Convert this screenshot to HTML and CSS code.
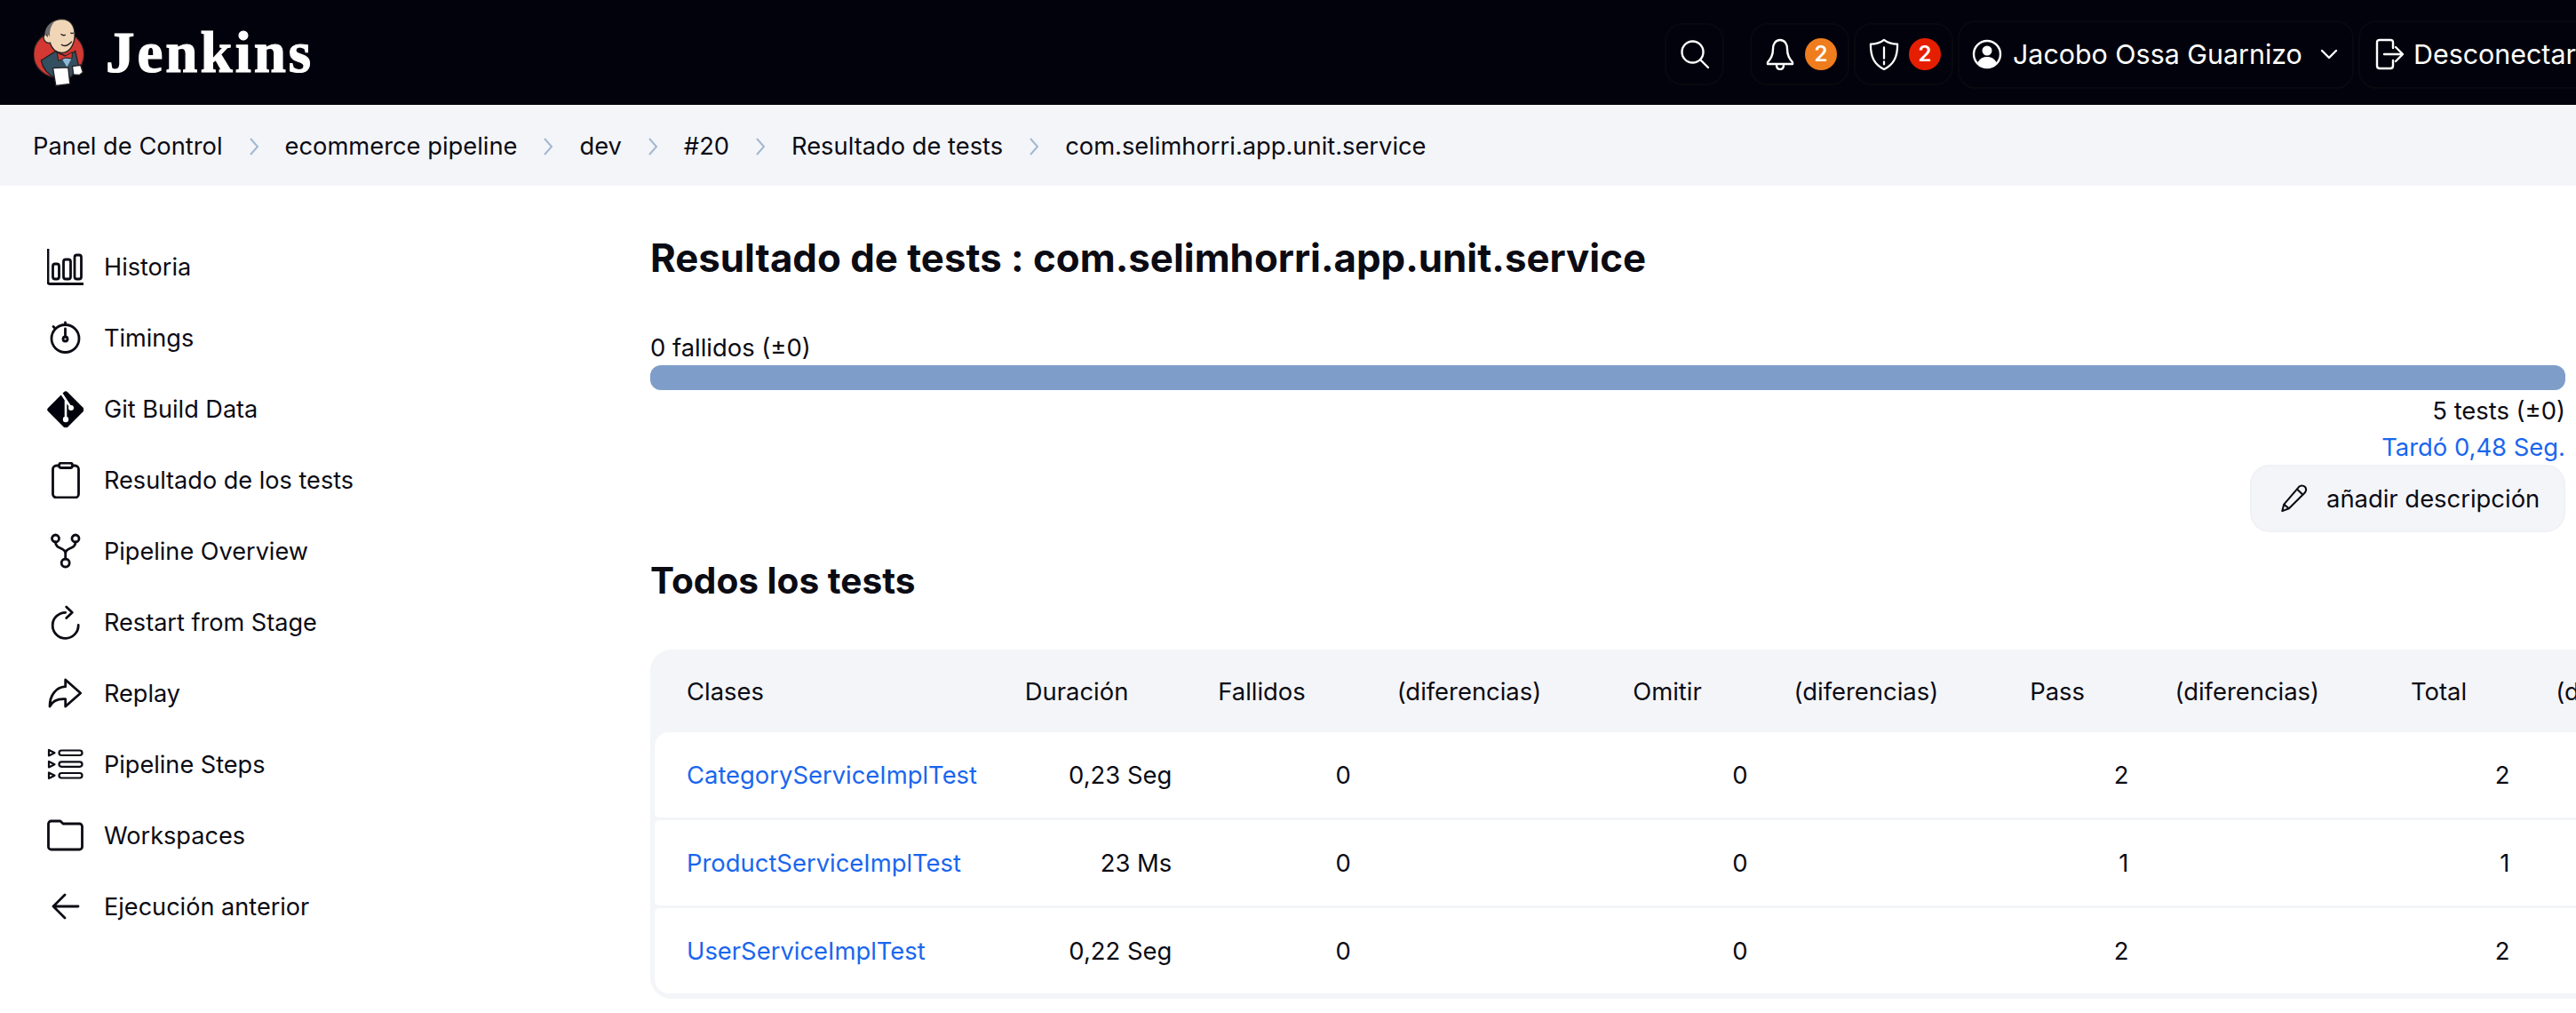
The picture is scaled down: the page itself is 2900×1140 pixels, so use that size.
FILE: index.html
```html
<!DOCTYPE html>
<html>
<head lang="es">
    <meta charset="UTF-8">
    <title>Resultado de tests</title>
    <link rel="stylesheet" href="styles.css">
</head>
<body>
    <header id="top">
        <div class="brand">
            <svg class="logo" viewBox="55 35 175 240">
                <ellipse cx="140" cy="162" rx="86" ry="80" fill="#d33833" stroke="#231f20" stroke-width="4"/>
                <path d="M80 182L128 152L170 170L196 150L207 200L182 238L130 242C105 232 86 212 80 182Z" fill="#335061" stroke="#231f20" stroke-width="4"/>
                <path d="M150 175L185 172L168 205Z" fill="#8fb8d6"/>
                <path d="M100 97C95 60 125 42 150 42C180 42 196 65 194 100C192 132 175 156 150 156C130 156 116 142 110 122C98 126 84 112 90 98C93 92 97 93 100 97Z" fill="#f0d6b7" stroke="#231f20" stroke-width="4"/>
                <path d="M92 98C92 75 105 55 127 48C111 65 108 85 110 102C104 92 97 92 92 98Z" fill="#6d6b6d"/>
                <path d="M147 92Q155 100 163 95M180 88Q185 93 190 88M148 128Q165 140 184 118" fill="none" stroke="#231f20" stroke-width="4"/>
                <path d="M134 156L161 167L186 154L185 176L162 173L139 184Z" fill="#d33833" stroke="#231f20" stroke-width="3"/>
                <path d="M120 208L172 206L178 262L130 268Z" fill="#fff" stroke="#231f20" stroke-width="4"/>
                <path d="M186 202L214 198L222 222L210 232L190 230Z" fill="#fff" stroke="#231f20" stroke-width="4"/>
            </svg>
            <span class="wordmark">Jenkins</span>
        </div>
        <div class="actions">
            <a class="btn btn-search">
                <svg class="hicon" viewBox="0 0 34 34"><circle cx="14.500" cy="14.500" r="12"/><path d="M23.500 23.500L32 32"/></svg>
            </a>
            <a class="btn btn-alert">
                <svg class="hicon" viewBox="0 0 32 36"><path d="M16 2C10.500 2 8 7 8 12C8 19 6 23 2 27V29H30V27C26 23 24 19 24 12C24 7 21.500 2 16 2Z"/><path d="M12 30C12 33 13.500 35 16 35C18.500 35 20 33 20 30"/></svg>
                <span class="badge orange">2</span>
            </a>
            <a class="btn btn-alert">
                <svg class="hicon" viewBox="0 0 36 38"><path d="M18 2C13 6 8 7 2 7C2 22 6 31 18 37C30 31 34 22 34 7C28 7 23 6 18 2Z"/><path d="M18 11V24M18 28V31"/></svg>
                <span class="badge red">2</span>
            </a>
            <a class="btn btn-user">
                <svg class="hicon user-icon" viewBox="0 0 34 34"><circle cx="17" cy="17" r="15"/><circle class="solid" cx="17" cy="13" r="5.500"/><path class="solid" d="M6 27C9 21 13 20 17 20C21 20 25 21 28 27C25 31 21 32 17 32C13 32 9 31 6 27Z"/></svg>
                <span>Jacobo Ossa Guarnizo</span>
                <svg class="hicon chevron" viewBox="0 0 20 12"><path d="M2 2L10 10L18 2"/></svg>
            </a>
            <a class="btn btn-logout">
                <svg class="hicon" viewBox="0 0 32 36"><path d="M20 11V5C20 3 19 2 17 2H5C3 2 2 3 2 5V31C2 33 3 34 5 34H17C19 34 20 33 20 31V25"/><path d="M10 18H30M23 10L31 18L23 26"/></svg>
                <span>Desconectar</span>
            </a>
        </div>
    </header>

    <nav id="crumbs">
        <a>Panel de Control</a>
        <svg class="sep" viewBox="0 0 12 22"><path d="M2 2L10 11L2 20"/></svg>
        <a>ecommerce pipeline</a>
        <svg class="sep" viewBox="0 0 12 22"><path d="M2 2L10 11L2 20"/></svg>
        <a>dev</a>
        <svg class="sep" viewBox="0 0 12 22"><path d="M2 2L10 11L2 20"/></svg>
        <a>#20</a>
        <svg class="sep" viewBox="0 0 12 22"><path d="M2 2L10 11L2 20"/></svg>
        <a>Resultado de tests</a>
        <svg class="sep" viewBox="0 0 12 22"><path d="M2 2L10 11L2 20"/></svg>
        <a>com.selimhorri.app.unit.service</a>
    </nav>

    <div id="page">
        <aside id="side">
            <a class="task">
                <svg class="ticon" viewBox="0 0 41 41"><path d="M1 0V37.500A2 2 0 0 0 3 39.500H41"/><rect x="6.500" y="17" width="7" height="17" rx="2.500"/><rect x="18.500" y="12" width="8" height="22" rx="2.500"/><rect x="31" y="7" width="7.500" height="27" rx="2.500"/></svg>
                <span>Historia</span>
            </a>
            <a class="task">
                <svg class="ticon" viewBox="0 0 41 41"><circle cx="20.500" cy="21" r="15.500"/><path d="M20.500 5V3M8.500 9L7 7.500M20.500 19V10"/><circle cx="20.500" cy="21.500" r="2.500"/></svg>
                <span>Timings</span>
            </a>
            <a class="task">
                <svg class="ticon" viewBox="0 0 41 41"><rect class="git-bg" x="5.500" y="5.500" width="31" height="31" rx="3" transform="rotate(45 21 21)"/><path class="git-line" d="M15 1L27 19M21 11V32"/><circle class="git-dot" cx="27" cy="19" r="3"/><circle class="git-dot" cx="21" cy="32" r="3.200"/></svg>
                <span>Git Build Data</span>
            </a>
            <a class="task">
                <svg class="ticon" viewBox="0 0 41 41"><rect x="6.500" y="4" width="29" height="36" rx="4"/><rect x="13.500" y="1" width="15" height="5.500" rx="2.500" class="clip"/></svg>
                <span>Resultado de los tests</span>
            </a>
            <a class="task">
                <svg class="ticon" viewBox="0 0 41 41"><circle cx="9.500" cy="6" r="4"/><circle cx="32" cy="6" r="4"/><circle cx="20.700" cy="33.500" r="4.500"/><path d="M9.500 10C9.500 19 20.700 15 20.700 23V29M32 10C32 19 20.700 15 20.700 23"/></svg>
                <span>Pipeline Overview</span>
            </a>
            <a class="task">
                <svg class="ticon" viewBox="0 0 41 41"><path d="M20.700 9.300A14.500 14.500 0 1 0 35.200 23.500"/><path d="M21.700 3L28.300 9.300L21.700 15.500"/></svg>
                <span>Restart from Stage</span>
            </a>
            <a class="task">
                <svg class="ticon" viewBox="0 0 41 41"><path d="M20.700 5L37.700 20L20.700 35V26.700C12 26 6 29 3 35C3 22 10 13.500 20.700 12.700Z"/></svg>
                <span>Replay</span>
            </a>
            <a class="task">
                <svg class="ticon thin" viewBox="0 0 41 41"><rect x="13.500" y="4.500" width="26" height="5.500" rx="2.700"/><rect x="13.500" y="17.300" width="26" height="5.500" rx="2.700"/><rect x="13.500" y="30" width="26" height="5.500" rx="2.700"/><path d="M2 4V10.500L8.500 7.300ZM2 17V23.500L8.500 20.300ZM2 29.500V36L8.500 32.800Z"/></svg>
                <span>Pipeline Steps</span>
            </a>
            <a class="task">
                <svg class="ticon" viewBox="0 0 41 41"><path d="M1.500 33V7A3 3 0 0 1 4.500 4H15L18 7H36.500A3 3 0 0 1 39.500 10V33A3 3 0 0 1 36.500 36H4.500A3 3 0 0 1 1.500 33Z"/></svg>
                <span>Workspaces</span>
            </a>
            <a class="task">
                <svg class="ticon" viewBox="0 0 41 41"><path d="M35 20H7M20 7L7 20L20 33"/></svg>
                <span>Ejecución anterior</span>
            </a>
        </aside>

        <main id="main">
            <h1>Resultado de tests : com.selimhorri.app.unit.service</h1>
            <div class="fails">0 fallidos (±0)</div>
            <div class="bar"></div>
            <div class="count">5 tests (±0)</div>
            <div class="took"><a>Tardó 0,48 Seg.</a></div>
            <div class="desc-row">
                <a class="desc-btn">
                    <svg class="pencil" viewBox="0 0 32 34"><path d="M2 32L4 24L22 3C24 1 27 1 29 3C31 5 31 8 29 10L10 29ZM4 24L10 29M20 6L26 12"/></svg>
                    <span>añadir descripción</span>
                </a>
            </div>
            <h2>Todos los tests</h2>
            <div class="table-wrap">
                <table class="results">
                    <colgroup>
                        <col class="w-name"><col class="w-dur"><col class="w-num"><col class="w-diff">
                        <col class="w-num2"><col class="w-diff"><col class="w-num3"><col class="w-diff">
                        <col class="w-num3"><col class="w-diff">
                    </colgroup>
                    <thead>
                        <tr>
                            <th>Clases</th><th>Duración</th><th>Fallidos</th><th>(diferencias)</th>
                            <th>Omitir</th><th>(diferencias)</th><th>Pass</th><th>(diferencias)</th>
                            <th>Total</th><th>(diferencias)</th>
                        </tr>
                    </thead>
                    <tbody>
                        <tr>
                            <td><a>CategoryServiceImplTest</a></td><td class="num">0,23 Seg</td><td class="num">0</td><td></td>
                            <td class="num">0</td><td></td><td class="num">2</td><td></td><td class="num">2</td><td></td>
                        </tr>
                        <tr>
                            <td><a>ProductServiceImplTest</a></td><td class="num">23 Ms</td><td class="num">0</td><td></td>
                            <td class="num">0</td><td></td><td class="num">1</td><td></td><td class="num">1</td><td></td>
                        </tr>
                        <tr>
                            <td><a>UserServiceImplTest</a></td><td class="num">0,22 Seg</td><td class="num">0</td><td></td>
                            <td class="num">0</td><td></td><td class="num">2</td><td></td><td class="num">2</td><td></td>
                        </tr>
                    </tbody>
                </table>
            </div>
        </main>
    </div>
</body>
</html>
```

FILE: styles.css
```css
*{
    margin: 0;
    padding: 0;
    box-sizing: border-box;
}
html,body{
    width: 2900px;
    height: 1140px;
    overflow: hidden;
}
body{
    background: #fff;
    color: #0b0b14;
    font-family: Inter, "Liberation Sans", sans-serif;
    font-size: 27.4px;
}

/* top bar */
#top{
    display: flex;
    align-items: center;
    height: 118px;
    padding-left: 38px;
    background: #02020c;
    color: #fff;
}
.brand{
    flex: 0 0 1836px;
    display: flex;
    align-items: center;
    gap: 23px;
}
.logo{
    width: 58px;
    height: 80px;
}
.wordmark{
    font-family: "Liberation Serif", serif;
    font-weight: bold;
    font-size: 65px;
    letter-spacing: 3px;
    line-height: 1;
    -webkit-text-stroke: 1.2px #fff;
}
.actions{
    flex: none;
    display: flex;
    align-items: center;
    gap: 5px;
    padding-top: 4px;
    font-size: 30.4px;
}
.btn{
    flex: none;
    display: flex;
    align-items: center;
    height: 70px;
    border: 2px solid #08080f;
    border-radius: 20px;
}
.btn-search{
    width: 67px;
    justify-content: center;
    margin-right: 24px;
}
.btn-alert{
    width: 112px;
    padding-left: 15px;
    gap: 11px;
}
.btn-user{
    width: 446px;
    height: 77px;
    padding-left: 14px;
    gap: 12px;
}
.btn-logout{
    height: 77px;
    width: 300px;
    padding-left: 16px;
    gap: 10px;
}
.hicon{
    flex: none;
    width: 34px;
    height: 36px;
    fill: none;
    stroke: #fff;
    stroke-width: 2.4;
    stroke-linecap: round;
    stroke-linejoin: round;
}
.hicon .solid{
    fill: #fff;
    stroke: none;
}
.chevron{
    width: 20px;
    height: 12px;
    margin-left: 8px;
}
.badge{
    flex: none;
    width: 36px;
    height: 36px;
    border-radius: 50%;
    font-size: 24px;
    font-weight: 600;
    line-height: 36px;
    text-align: center;
}
.orange{
    background: #ef7d1e;
}
.red{
    background: #e61e00;
}

/* breadcrumb */
#crumbs{
    display: flex;
    align-items: center;
    gap: 29px;
    height: 91px;
    padding: 2px 0 0 37px;
    background: #f4f5f8;
    font-size: 27.3px;
}
.sep{
    width: 12px;
    height: 22px;
    fill: none;
    stroke: #a3b7d2;
    stroke-width: 2;
}

/* sidebar */
#page{
    display: flex;
}
#side{
    flex: 0 0 732px;
    padding: 51px 0 0 53px;
    font-size: 27.1px;
}
.task{
    display: flex;
    align-items: center;
    gap: 23px;
    height: 80px;
}
.ticon{
    flex: none;
    width: 41px;
    height: 41px;
    fill: none;
    stroke: #0b0b14;
    stroke-width: 2.8;
    stroke-linejoin: round;
    stroke-linecap: round;
}
.ticon .clip{
    fill: #fff;
}
.thin{
    stroke-width: 2.200;
}
.git-bg{
    fill: #02020c;
    stroke: none;
}
.git-line{
    stroke: #fff;
    stroke-width: 2.600;
}
.git-dot{
    fill: #fff;
    stroke: none;
}

/* main column */
#main{
    flex: none;
    width: 2156px;
    padding-top: 54px;
}
h1{
    font-size: 43.8px;
    font-weight: 700;
    line-height: 56px;
}
.fails{
    margin-top: 54px;
    line-height: 36px;
}
.bar{
    height: 28px;
    margin-top: 2px;
    background: #7e9dc9;
    border-radius: 12px;
}
.count{
    margin-top: 4px;
    line-height: 38px;
    text-align: right;
}
.took{
    margin-top: 3px;
    line-height: 38px;
    text-align: right;
}
.took a,.results a{
    color: #1a66ee;
}
.desc-row{
    display: flex;
    justify-content: flex-end;
    margin-top: 1px;
}
.desc-btn{
    display: flex;
    align-items: center;
    gap: 21px;
    width: 355px;
    height: 76px;
    padding-left: 32px;
    background: #f4f5f8;
    border: 2px solid #f0f1f5;
    border-radius: 22px;
}
.pencil{
    width: 31px;
    height: 32px;
    fill: none;
    stroke: #0b0b14;
    stroke-width: 2.200;
    stroke-linejoin: round;
}
h2{
    margin-top: 30px;
    font-size: 40.6px;
    font-weight: 700;
    line-height: 50px;
}

/* table */
.table-wrap{
    width: 2392px;
    margin-top: 52px;
    padding: 0 6px 3px 5px;
    background: #f4f5f8;
    border-radius: 24px;
}
.results{
    table-layout: fixed;
    width: 2380px;
    border-collapse: separate;
    border-spacing: 0 3px;
}
.w-name{ width: 390px; }
.w-dur{ width: 217px; }
.w-num{ width: 201px; }
.w-num2{ width: 181px; }
.w-num3{ width: 163px; }
.w-diff{ width: 265px; }
.results th{
    height: 87px;
    padding: 0 26px;
    font-weight: 400;
    text-align: left;
    white-space: nowrap;
}
.results td{
    height: 96px;
    padding: 0 26px;
    background: #fff;
    white-space: nowrap;
}
.results th:first-child,.results td:first-child{
    padding-left: 36px;
}
.results td:first-child{
    border-radius: 5px 0 0 5px;
}
.results tbody tr:first-child td:first-child{
    border-top-left-radius: 16px;
}
.results tbody tr:last-child td:first-child{
    border-bottom-left-radius: 16px;
}
.results .num{
    text-align: right;
}
```
